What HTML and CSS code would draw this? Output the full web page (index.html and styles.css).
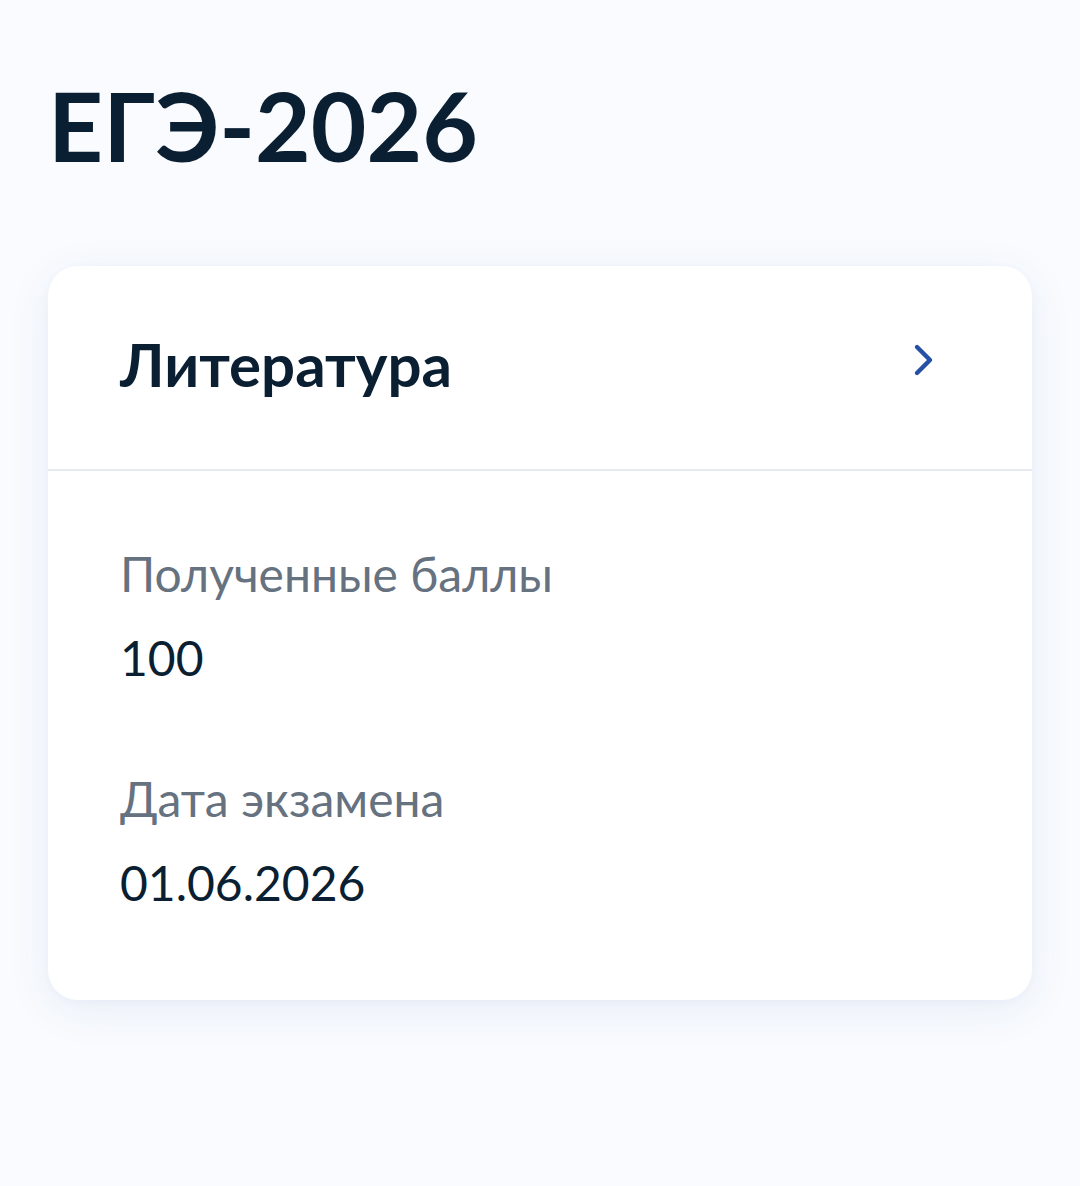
FILE: index.html
```html
<!DOCTYPE html>
<html lang="ru">
<head>
<meta charset="utf-8">
<title>ЕГЭ-2026</title>
<link rel="stylesheet" href="styles.css">
</head>
<body>
<main class="page">
  <h1 class="title">ЕГЭ-2026</h1>
  <section class="card">
    <header class="card-head">
      <h2 class="subject">Литература</h2>
      <svg class="chevron" width="24" height="34" viewBox="0 0 24 34" aria-hidden="true">
        <path d="M5 4 L18 17 L5 30" fill="none" stroke="#2550a8" stroke-width="4.4" stroke-linecap="round" stroke-linejoin="round"/>
      </svg>
    </header>
    <div class="card-body">
      <div class="field">
        <div class="label">Полученные баллы</div>
        <div class="value">100</div>
      </div>
      <div class="field">
        <div class="label">Дата экзамена</div>
        <div class="value">01.06.2026</div>
      </div>
    </div>
  </section>
</main>
</body>
</html>
```
FILE: styles.css
```css
html, body {
  margin: 0;
  padding: 0;
  background: #f9fbfe;
}
body {
  font-family: Lato, "Noto Sans", sans-serif;
  color: #0b1f33;
  min-height: 1186px;
}
.page {
  padding: 67px 48px 0 48px;
}
.title {
  margin: 0;
  font-size: 96px;
  font-weight: 700;
  line-height: 1.2;
  letter-spacing: 0;
  color: #0b1f33;
}
.card {
  margin-top: 84px;
  background: #ffffff;
  border-radius: 30px;
  box-shadow: 0 10px 44px rgba(40, 80, 170, 0.08), 0 2px 8px rgba(40, 80, 170, 0.03);
  overflow: hidden;
}
.card-head {
  display: flex;
  align-items: center;
  justify-content: space-between;
  padding: 62px 96px 69px 72px;
  border-bottom: 2px solid #e6eaf0;
}
.subject {
  margin: 0;
  font-size: 60px;
  font-weight: 700;
  line-height: 72px;
  color: #0b1f33;
}
.chevron {
  display: block;
  margin-top: -8px;
}
.card-body {
  display: flex;
  flex-direction: column;
  gap: 85px;
  padding: 75px 72px 89px 72px;
}
.field {
  display: flex;
  flex-direction: column;
  gap: 28px;
}
.label, .value {
  font-size: 48px;
  line-height: 56px;
  font-weight: 400;
}
.label {
  color: #66727f;
}
.value {
  color: #0b1f33;
}
```
